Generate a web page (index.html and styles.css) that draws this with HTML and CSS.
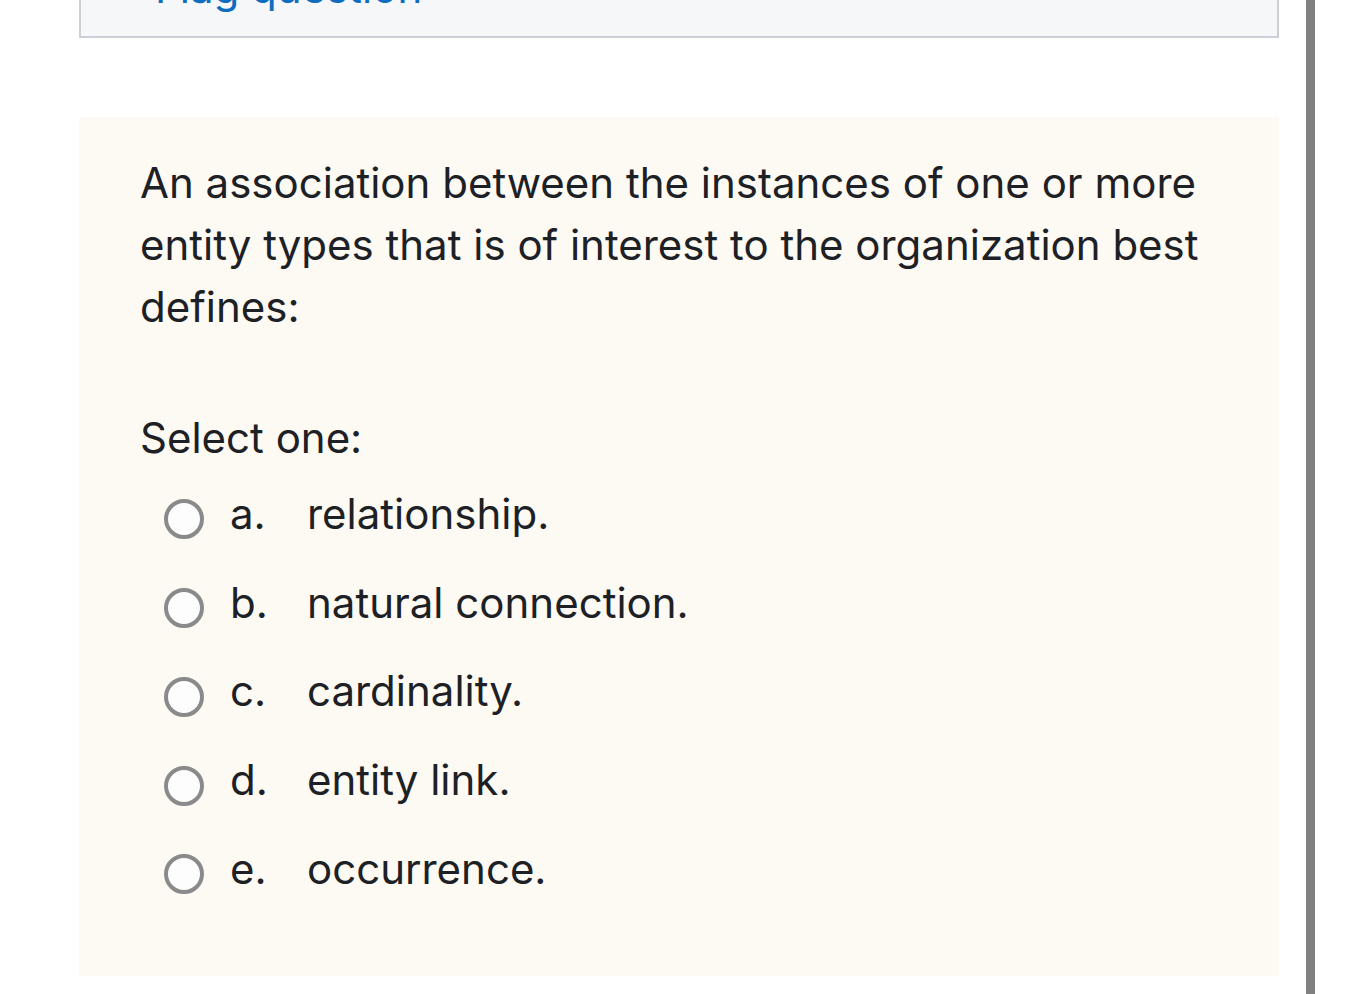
FILE: index.html
```html
<!DOCTYPE html>
<html>
<head>
<meta charset="utf-8">
<link rel="stylesheet" href="styles.css">
</head>
<body>
<div class="page">
  <div class="main">
    <div class="info">
      <div class="flag">
        <span class="flag-icon">&#x2691;</span>
        <span class="flag-text">Flag question</span>
      </div>
    </div>
    <div class="question">
      <p class="qtext">An association between the instances of one or more entity types that is of interest to the organization best defines:</p>
      <p class="prompt">Select one:</p>
      <div class="answers">
        <div class="opt"><span class="radio"></span><span class="letter">a.</span><span class="label">relationship.</span></div>
        <div class="opt"><span class="radio"></span><span class="letter">b.</span><span class="label">natural connection.</span></div>
        <div class="opt"><span class="radio"></span><span class="letter">c.</span><span class="label">cardinality.</span></div>
        <div class="opt"><span class="radio"></span><span class="letter">d.</span><span class="label">entity link.</span></div>
        <div class="opt"><span class="radio"></span><span class="letter">e.</span><span class="label">occurrence.</span></div>
      </div>
    </div>
  </div>
  <div class="edge"></div>
</div>
</body>
</html>
```

FILE: styles.css
```css
html, body {
  margin: 0;
  padding: 0;
  background: #ffffff;
  overflow: hidden;
}
body {
  font-family: Inter, "Noto Sans", sans-serif;
  color: #1d2125;
}
.page {
  display: flex;
  height: 994px;
  padding-left: 79px;
}
.main {
  width: 1200px;
  display: flex;
  flex-direction: column;
}
.info {
  margin-top: -60px;
  height: 98px;
  background: #f5f7f9;
  border: 2px solid #ccd0d6;
  box-sizing: border-box;
}
.flag {
  display: flex;
  align-items: center;
  gap: 14px;
  padding: 22px 0 0 30px;
  font-size: 42px;
  line-height: 48px;
}
.flag-icon {
  color: #555;
  font-size: 34px;
}
.flag-text {
  color: #0f6cbf;
}
.question {
  margin-top: 79px;
  height: 859px;
  background: #fcfaf3;
  padding: 35px 0 0 61px;
  box-sizing: border-box;
}
.qtext {
  margin: 0;
  font-size: 42px;
  line-height: 62px;
  padding-right: 40px;
}
.prompt {
  margin: 69px 0 0 0;
  font-size: 42px;
  line-height: 62px;
}
.answers {
  display: flex;
  flex-direction: column;
  padding-left: 24px;
}
.opt {
  display: flex;
  align-items: center;
  height: 88.75px;
  font-size: 42px;
}
.radio {
  width: 40px;
  height: 40px;
  box-sizing: border-box;
  border: 4px solid #8a8a8a;
  border-radius: 50%;
  background: #fdfdfd;
  margin-top: 12px;
  flex: none;
}
.letter {
  margin-left: 26px;
  width: 77px;
}
.edge {
  margin-left: 27px;
  width: 9px;
  height: 994px;
  background: #808080;
}
```
